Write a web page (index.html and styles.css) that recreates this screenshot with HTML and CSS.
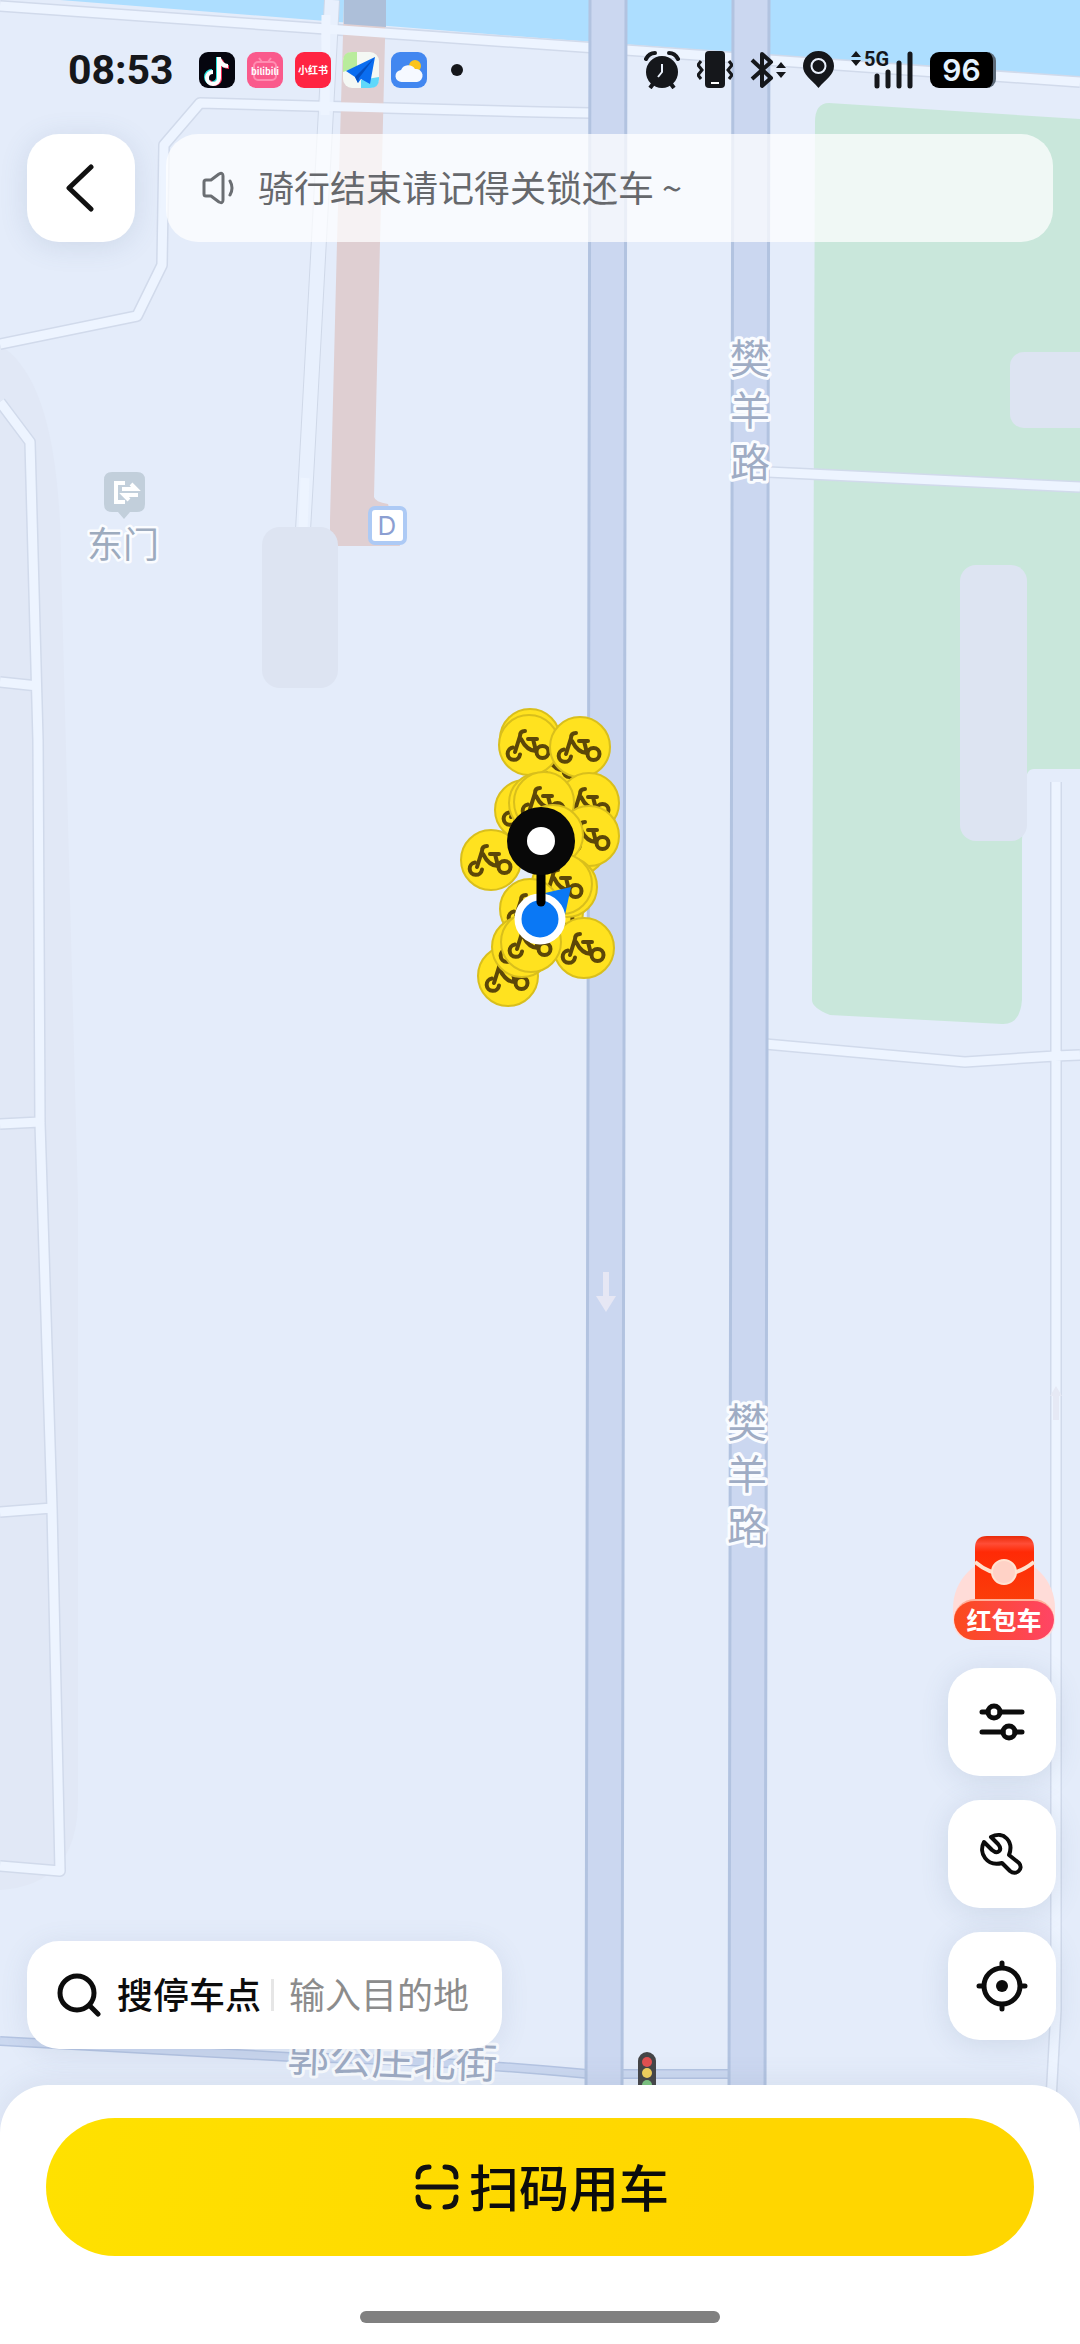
FILE: index.html
```html
<!DOCTYPE html>
<html lang="zh-CN">
<head>
    <meta charset="UTF-8">
    <meta name="viewport" content="width=device-width, initial-scale=1.0">
    <title>扫码用车</title>
    <link rel="stylesheet" href="styles.css">
</head>
<body>

<div class="screen">

    <!-- Map -->
    <svg class="map" viewBox="0 0 1080 2344" preserveAspectRatio="xMidYMid slice" aria-label="地图">
        <defs>
            <g id="bike">
                <circle r="30" fill="#ffe21f" stroke="#d9bf1c" stroke-width="2"/>
                <g fill="none" stroke="#5c4708" stroke-width="4" stroke-linecap="round" stroke-linejoin="round">
                    <path d="M-16 2.500a6.200 6.200 0 1 0 7 7"/>
                    <circle cx="13.500" cy="7" r="6"/>
                    <path d="M-4-14q-5 0-5 5L-14 7M-8-6Q-2 6 7 6M-1-6h9M4-6l3 12"/>
                </g>
            </g>
        </defs>

        <rect width="1080" height="2344" fill="#e4ecfa"/>
        <path d="M0 345C40 370 60 440 61 560L78 1200V1800Q78 1885 0 1890z" fill="#e1e8f6"/>

        <!-- Water, park and buildings -->
        <path d="M60 0H1080V78L540 38z" fill="#addeff"/>
        <path d="M815 122Q815 103 829 103L1080 119V769H1034Q1026 769 1026 782L1022 840V1000Q1020 1025 1002 1024L830 1015Q812 1008 812 1000z" fill="#c9e7db"/>
        <rect x="1010" y="352" width="90" height="76" rx="14" fill="#dde4f2"/>
        <rect x="960" y="565" width="67" height="276" rx="16" fill="#dde4f2"/>

        <!-- Small roads: outline first, then fill -->
        <g fill="none" stroke="#d1daeb" stroke-width="12" stroke-linejoin="round">
            <path d="M0 6L540 44L1080 82"/>
            <path d="M591 113L540 112L200 103L164 145L162 265L137 316L0 344"/>
            <path d="M0 402L30 442L38 740L40 1123L52 1508L60 1871L0 1866M0 682L38 686M0 1124L40 1122M0 1512L52 1508"/>
            <path d="M768 472L1080 487M765 1044L965 1062L1055 1056L1080 1055M1056 782V2010L1051 2100"/>
        </g>
        <path d="M332 0L306 478L303 530" fill="none" stroke="#cfd8e8" stroke-width="16"/>
        <path d="M332 0L306 478L303 530" fill="none" stroke="#e8f0fd" stroke-width="14"/>
        <path d="M344 0H386L380 242L374 497Q375 502 388 504L400 546H330V520L337 242z" fill="#dfcfd2"/>
        <path d="M344 0H386V27L344 24z" fill="#adbfd9"/>
        <g fill="none" stroke="#edf4ff" stroke-width="9" stroke-linejoin="round">
            <path d="M0 6L540 44L1080 82"/>
            <path d="M591 113L540 112L200 103L164 145L162 265L137 316L0 344"/>
            <path d="M0 402L30 442L38 740L40 1123L52 1508L60 1871L0 1866M0 682L38 686M0 1124L40 1122M0 1512L52 1508"/>
            <path d="M768 472L1080 487M765 1044L965 1062L1055 1056L1080 1055M1056 782V2010L1051 2100"/>
            <path d="M326 15L325 115M305 478L303 530"/>
        </g>
        <rect x="262" y="527" width="76" height="161" rx="18" fill="#dde4f2"/>

        <!-- Main roads -->
        <path d="M0 2041L290 2057Q440 2060 588 2074H735" fill="none" stroke="#b4c4e2" stroke-width="10"/>
        <path d="M0 2041L290 2057Q440 2060 588 2074H735" fill="none" stroke="#cbd8f0" stroke-width="7"/>
        <g fill="none">
            <path d="M608 0L604 2100M751 0L747 2100" stroke="#b2c3e0" stroke-width="39"/>
            <path d="M608 0L604 2100M751 0L747 2100" stroke="#cbd7f0" stroke-width="33"/>
        </g>
        <path d="M603 1272h6v24h7l-10 16l-10-16h7z" fill="#e6e7f4"/>
        <path d="M1053 1420V1396h-3l6-10l6 10h-3v24z" fill="#e6e9f5"/>

        <!-- Traffic light -->
        <rect x="638" y="2052" width="18" height="50" rx="9" fill="#454547"/>
        <circle cx="647" cy="2062" r="5" fill="#e25050"/>
        <circle cx="647" cy="2073" r="5" fill="#f0cf5c"/>
        <circle cx="647" cy="2085" r="5" fill="#7cc47f"/>

        <!-- Place names -->
        <g class="road-name">
            <text><tspan x="750" y="373">樊</tspan><tspan x="750" y="425">羊</tspan><tspan x="750" y="477">路</tspan></text>
            <text><tspan x="747" y="1437">樊</tspan><tspan x="747" y="1489">羊</tspan><tspan x="747" y="1541">路</tspan></text>
            <text class="street" x="392" y="2075" transform="rotate(2 392 2075)">郭公庄北街</text>
        </g>

        <path d="M112 472h25q8 0 8 8v24q0 8-8 8h-7l-6 7l-6-7h-6q-8 0-8-8v-24q0-8 8-8z" fill="#c2cfdb"/>
        <path d="M125 483h-9v19h9M122 489h14l-5-5M138 495h-14l5 5" fill="none" stroke="#fff" stroke-width="4"/>
        <text class="place-name" x="123" y="558">东门</text>

        <rect x="370" y="508" width="35" height="35" rx="5" fill="#fff" stroke="#adcaf5" stroke-width="4"/>
        <text class="exit-name" x="387" y="535">D</text>

        <!-- Bikes nearby -->
        <use href="#bike" x="530" y="739"/>
        <use href="#bike" x="556" y="764"/>
        <use href="#bike" x="529" y="745"/>
        <use href="#bike" x="580" y="747"/>
        <use href="#bike" x="589" y="803"/>
        <use href="#bike" x="525" y="810"/>
        <use href="#bike" x="539" y="803"/>
        <use href="#bike" x="544" y="802"/>
        <use href="#bike" x="577" y="845"/>
        <use href="#bike" x="589" y="836"/>
        <use href="#bike" x="553" y="835"/>
        <use href="#bike" x="491" y="860"/>
        <use href="#bike" x="553" y="912"/>
        <use href="#bike" x="567" y="887"/>
        <use href="#bike" x="562" y="884"/>
        <use href="#bike" x="508" y="976"/>
        <use href="#bike" x="584" y="948"/>
        <use href="#bike" x="530" y="909"/>
        <use href="#bike" x="522" y="947"/>
        <use href="#bike" x="531" y="942"/>

        <!-- Current position and pin -->
        <path d="M545 893L571 887L565 915z" fill="#0a78f5"/>
        <circle cx="540" cy="919" r="22" fill="#0a78f5" stroke="#fff" stroke-width="7"/>
        <path d="M541 860V902" stroke="#000" stroke-width="9" stroke-linecap="round"/>
        <circle cx="541" cy="841" r="34" fill="#080808"/>
        <circle cx="541" cy="841" r="14" fill="#fff"/>
    </svg>

    <!-- Status bar -->
    <div class="status-bar">
        <span class="time">08:53</span>
        <div class="apps">
            <svg width="36" height="36" viewBox="0 0 36 36">
                <rect width="36" height="36" rx="9" fill="#05060f"/>
                <g fill="none" stroke-width="4">
                    <path d="M19 5v20a6 6 0 1 1-6-6M19 7q2 7 9 7" stroke="#25e5e0"/>
                    <path d="M21 7v20a6 6 0 0 1-11 2M22 8q2 7 8 7" stroke="#f52c56"/>
                    <path d="M20 5v21a6 6 0 1 1-6-6M20 6q2 8 9 8" stroke="#fff"/>
                </g>
            </svg>
            <svg width="36" height="36" viewBox="0 0 36 36">
                <rect width="36" height="36" rx="9" fill="#fa5a8c"/>
                <path d="M12 6l3 4M24 6l-3 4" stroke="#ff8db1" stroke-width="2"/>
                <rect x="7" y="10" width="22" height="18" rx="4" fill="none" stroke="#ff8db1" stroke-width="2"/>
                <text class="logo-text" x="18" y="23" font-size="9">bilibili</text>
            </svg>
            <svg width="36" height="36" viewBox="0 0 36 36">
                <rect width="36" height="36" rx="9" fill="#ff2442"/>
                <text class="logo-text" x="18" y="22" font-size="10">小红书</text>
            </svg>
            <svg width="36" height="36" viewBox="0 0 36 36">
                <rect width="36" height="36" rx="9" fill="#f4f8f4"/>
                <path d="M9 0h5v15L0 20V9Q0 0 9 0z" fill="#b9ec9c"/>
                <path d="M18 28l18-3v2q0 9-9 9h-9z" fill="#5fd8fa"/>
                <path d="M32 5L3 19l9 6l3 6l3-4l9 5z" fill="#0a6df0"/>
                <path d="M32 5L12 25l3 6l1-5z" fill="#054fc0"/>
            </svg>
            <svg width="36" height="36" viewBox="0 0 36 36">
                <rect width="36" height="36" rx="9" fill="#4287f0"/>
                <circle cx="24" cy="14" r="6" fill="#fcc419"/>
                <path d="M11 30a6 6 0 0 1-1-12a8 8 0 0 1 14-1a6 6 0 1 1 2 13z" fill="#f6f9ff"/>
            </svg>
        </div>
        <span class="more-dot"></span>

        <div class="system">
            <svg width="36" height="38" viewBox="0 0 36 38">
                <circle cx="18" cy="21" r="16" fill="#15171b"/>
                <path d="M2 8Q5 2 11 2M34 8Q31 2 25 2" fill="none" stroke="#15171b" stroke-width="4" stroke-linecap="round"/>
                <path d="M9 33l-3 4M27 33l3 4" stroke="#15171b" stroke-width="4"/>
                <path d="M18 13v8l-4 5" fill="none" stroke="#eaf1fc" stroke-width="2"/>
            </svg>
            <svg width="36" height="38" viewBox="0 0 36 38">
                <rect x="8" y="0" width="20" height="37" rx="4" fill="#15171b"/>
                <path d="M14 32h8" stroke="#fff" stroke-width="2"/>
                <path d="M4 10L1 14l4 5l-4 5l3 4M32 10l3 4l-4 5l4 5l-3 4" fill="none" stroke="#15171b" stroke-width="3"/>
            </svg>
            <svg width="36" height="38" viewBox="0 0 36 38">
                <path d="M2 9l19 18l-9 8V3l9 8L2 28" fill="none" stroke="#15171b" stroke-width="4" stroke-linejoin="round"/>
                <path d="M26 17l5-6l5 6zM26 21l5 6l5-6z" fill="#15171b"/>
            </svg>
            <svg width="31" height="38" viewBox="0 0 31 38">
                <path d="M15.500 37C8 28 0 24 0 15a15.500 15 0 0 1 31 0C31 24 23 28 15.500 37z" fill="#15171b"/>
                <circle cx="15.500" cy="15" r="7" fill="#15171b" stroke="#eaf1fc" stroke-width="2"/>
            </svg>
            <svg class="signal" width="62" height="38" viewBox="0 0 62 38">
                <path d="M0 6l5-6l5 6zM0 9l5 6l5-6z" fill="#15171b"/>
                <text class="network" x="13" y="15">5G</text>
                <path d="M26 25v10M37 21v14M48 12v23M59 3v32" stroke="#15171b" stroke-width="5" stroke-linecap="round"/>
            </svg>
            <span class="battery">96</span>
        </div>
    </div>

    <!-- Top bar -->
    <header class="top-bar">
        <button class="tile" type="button" aria-label="返回">
            <svg width="48" height="48" viewBox="0 0 48 48"><path d="M34 3L12 24L34 45" fill="none" stroke="#111" stroke-width="5" stroke-linecap="round" stroke-linejoin="round"/></svg>
        </button>
        <div class="notice">
            <svg width="34" height="34" viewBox="0 0 34 34" fill="none" stroke="#6b6e73" stroke-width="3" stroke-linecap="round" stroke-linejoin="round">
                <path d="M3 11q0-2 2-2h5l8-6q4-2 4 2v24q0 4-4 2l-8-6H5q-2 0-2-2z"/>
                <path d="M29 10q4 7 0 14"/>
            </svg>
            <span class="label">骑行结束请记得关锁还车 ~</span>
        </div>
    </header>

    <!-- Search and side tools -->
    <div class="floating">
        <form class="search">
            <svg width="44" height="44" viewBox="0 0 44 44" fill="none" stroke="#0c0c0c" stroke-width="5" stroke-linecap="round"><circle cx="20" cy="20" r="17"/><path d="M33 33l8 8"/></svg>
            <label class="label" for="destination">搜停车点</label>
            <span class="divider"></span>
            <input class="label" type="text" id="destination" placeholder="输入目的地">
        </form>

        <div class="tools">
            <button class="red-packet" type="button">
                <svg width="104" height="104" viewBox="0 0 104 104">
                    <defs>
                        <linearGradient id="packet" x1="0" y1="0" x2="0" y2="1">
                            <stop offset="0" stop-color="#e92a08"/>
                            <stop offset=".12" stop-color="#ff4d36"/>
                            <stop offset=".25" stop-color="#ff2a06"/>
                            <stop offset="1" stop-color="#fb3d0a"/>
                        </linearGradient>
                    </defs>
                    <path d="M1 82V72a51 51 0 0 1 102 0V82Q103 104 82 104H22Q1 104 1 82z" fill="#ffdcd8"/>
                    <path d="M23 64V12Q23 0 35 0H70Q82 0 82 12V64z" fill="url(#packet)"/>
                    <path d="M23 26Q52 50 82 26" fill="none" stroke="#ffe0cc" stroke-width="4"/>
                    <circle cx="52" cy="36" r="12" fill="#ffd2c6" stroke="#ffe3d2" stroke-width="2"/>
                </svg>
                <span>红包车</span>
            </button>
            <button class="tile" type="button" aria-label="筛选">
                <svg width="48" height="48" viewBox="0 0 48 48" fill="none" stroke="#0c0c0c" stroke-width="5" stroke-linecap="round"><path d="M4 14h6M22 14h22M4 34h21M37 34h7"/><circle cx="16" cy="14" r="6"/><circle cx="31" cy="34" r="6"/></svg>
            </button>
            <button class="tile" type="button" aria-label="报修">
                <svg width="48" height="48" viewBox="0 0 48 48" fill="none" stroke="#0c0c0c" stroke-width="4" stroke-linecap="round" stroke-linejoin="round"><path d="M13 7C26 0 36 12 31 25L41 33C46 39 38 46 32 41L24 33C9 37 0 23 6 12L14 20C20 25 25 20 20 14z"/></svg>
            </button>
            <button class="tile" type="button" aria-label="定位">
                <svg width="52" height="52" viewBox="0 0 52 52" fill="none" stroke="#0c0c0c" stroke-width="5" stroke-linecap="round"><circle cx="26" cy="26" r="18"/><path d="M26 3v4M26 45v4M3 26h4M45 26h4"/><circle cx="26" cy="26" r="6" fill="#0c0c0c" stroke="none"/></svg>
            </button>
        </div>
    </div>

    <!-- Bottom sheet -->
    <footer class="sheet">
        <button class="scan" type="button">
            <svg width="44" height="46" viewBox="0 0 44 46" fill="none" stroke="#111" stroke-width="5" stroke-linecap="round"><path d="M3 13Q3 3 14 3M30 3Q41 3 41 13M3 33Q3 43 14 43M30 43Q41 43 41 33M3 23H41"/></svg>
            <span class="label">扫码用车</span>
        </button>
        <div class="home-indicator"></div>
    </footer>

</div>

</body>
</html>
```
FILE: styles.css
```css
/* Basic Reset */
* {
    box-sizing: border-box;
}

body {
    margin: 0;
    font-family: "Noto Sans CJK SC", sans-serif;
    color: #0c0c0c;
    background-color: #e4ecfa;
}

button {
    border: none;
    padding: 0;
    font-family: inherit;
    color: inherit;
    cursor: pointer;
}

svg {
    display: block;
    flex-shrink: 0;
}

.screen {
    position: relative;
    min-height: 100vh;
    display: flex;
    flex-direction: column;
}

/* Map behind everything */
.map {
    position: absolute;
    top: 0;
    left: 0;
    width: 100%;
    height: 100%;
}

.status-bar,
.top-bar,
.floating,
.sheet {
    position: relative;
}

.road-name {
    font-size: 40px;
    font-weight: 400;
    fill: #9facc4;
    stroke: #fafcff;
    stroke-width: 6px;
    stroke-linejoin: round;
    paint-order: stroke;
    text-anchor: middle;
}

.street {
    font-size: 42px;
}

.place-name {
    font-size: 36px;
    fill: #9dabbe;
    stroke: #fafcff;
    stroke-width: 5px;
    stroke-linejoin: round;
    paint-order: stroke;
    text-anchor: middle;
}

.exit-name {
    font-family: Inter, sans-serif;
    font-size: 26px;
    fill: #8c9fd2;
    text-anchor: middle;
}

/* Status bar */
.status-bar {
    display: flex;
    align-items: center;
    height: 134px;
    padding: 6px 84px 0 68px;
}

.time {
    font-family: Roboto, sans-serif;
    font-size: 41px;
    font-weight: 700;
    line-height: 40px;
    color: #15171b;
}

.apps {
    display: flex;
    gap: 12px;
    margin-left: 25px;
}

.logo-text {
    font-weight: 700;
    fill: #fff;
    text-anchor: middle;
}

.more-dot {
    width: 12px;
    height: 12px;
    margin-left: 24px;
    border-radius: 50%;
    background-color: #15171b;
}

.system {
    display: flex;
    align-items: center;
    gap: 17px;
    margin-left: auto;
}

.signal {
    overflow: visible;
}

.network {
    font-family: Roboto, sans-serif;
    font-size: 20px;
    font-weight: 700;
    fill: #15171b;
}

.battery {
    width: 66px;
    height: 36px;
    border-radius: 9px;
    border-right: 3px solid #5d6a78;
    background-color: #000;
    font-family: Inter, sans-serif;
    font-size: 30px;
    font-weight: 600;
    line-height: 36px;
    text-align: center;
    color: #e4f2ff;
}

/* Top bar */
.top-bar {
    display: flex;
    gap: 31px;
    padding: 0 27px;
}

.tile {
    display: flex;
    align-items: center;
    justify-content: center;
    flex-shrink: 0;
    width: 108px;
    height: 108px;
    border-radius: 32px;
    background-color: #fff;
    box-shadow: 0 4px 28px rgba(90, 110, 140, 0.16);
}

.notice {
    flex: 1;
    display: flex;
    align-items: center;
    gap: 23px;
    padding: 0 35px;
    border-radius: 32px;
    background-color: rgba(255, 255, 255, 0.72);
    font-size: 36px;
    line-height: 48px;
    color: #66686c;
}

/* The font sits low in its line, so lift it to the optical centre */
.notice .label,
.search .label,
.scan .label {
    padding: 0 0 5px;
}

/* Search and side tools */
.floating {
    display: flex;
    justify-content: space-between;
    align-items: flex-end;
    margin-top: auto;
    padding: 0 24px 36px 27px;
}

.search {
    display: flex;
    align-items: center;
    height: 108px;
    padding: 0 30px;
    border-radius: 32px;
    background-color: #fff;
    box-shadow: 0 4px 28px rgba(90, 110, 140, 0.12);
    font-size: 36px;
    line-height: 48px;
}

.search label {
    margin-left: 16px;
    font-weight: 500;
}

.divider {
    width: 3px;
    height: 32px;
    margin: 0 15px 0 10px;
    background-color: #e6e6e6;
}

.search input {
    width: 183px;
    border: none;
    outline: none;
    background: none;
    font: inherit;
}

.search input::placeholder {
    color: #8c8c8c;
    opacity: 1;
}

.tools {
    display: flex;
    flex-direction: column;
    gap: 24px;
    padding-bottom: 9px;
}

.red-packet {
    display: grid;
    align-self: flex-end;
    margin-bottom: 4px;
    background: none;
}

.red-packet svg,
.red-packet span {
    grid-area: 1 / 1;
}

.red-packet span {
    align-self: end;
    margin: 0 2px;
    padding-bottom: 3px;
    border-radius: 21px;
    border-top: 2px solid #ffb09a;
    background: linear-gradient(90deg, #fb4a1c, #ff4566);
    font-size: 25px;
    font-weight: 700;
    line-height: 36px;
    color: #fff;
}

/* Bottom sheet */
.sheet {
    padding: 33px 46px 21px;
    border-radius: 48px 48px 0 0;
    background-color: #fff;
    box-shadow: 0 -4px 28px rgba(90, 110, 140, 0.1);
}

.scan {
    display: flex;
    align-items: center;
    justify-content: center;
    gap: 10px;
    width: 100%;
    height: 138px;
    padding-left: 4px;
    border-radius: 69px;
    background: linear-gradient(100deg, #ffe100, #ffd600 70%);
    font-size: 50px;
    font-weight: 500;
    line-height: 64px;
}

.home-indicator {
    width: 360px;
    height: 12px;
    margin: 55px auto 0;
    border-radius: 6px;
    background-color: #808080;
}
```
